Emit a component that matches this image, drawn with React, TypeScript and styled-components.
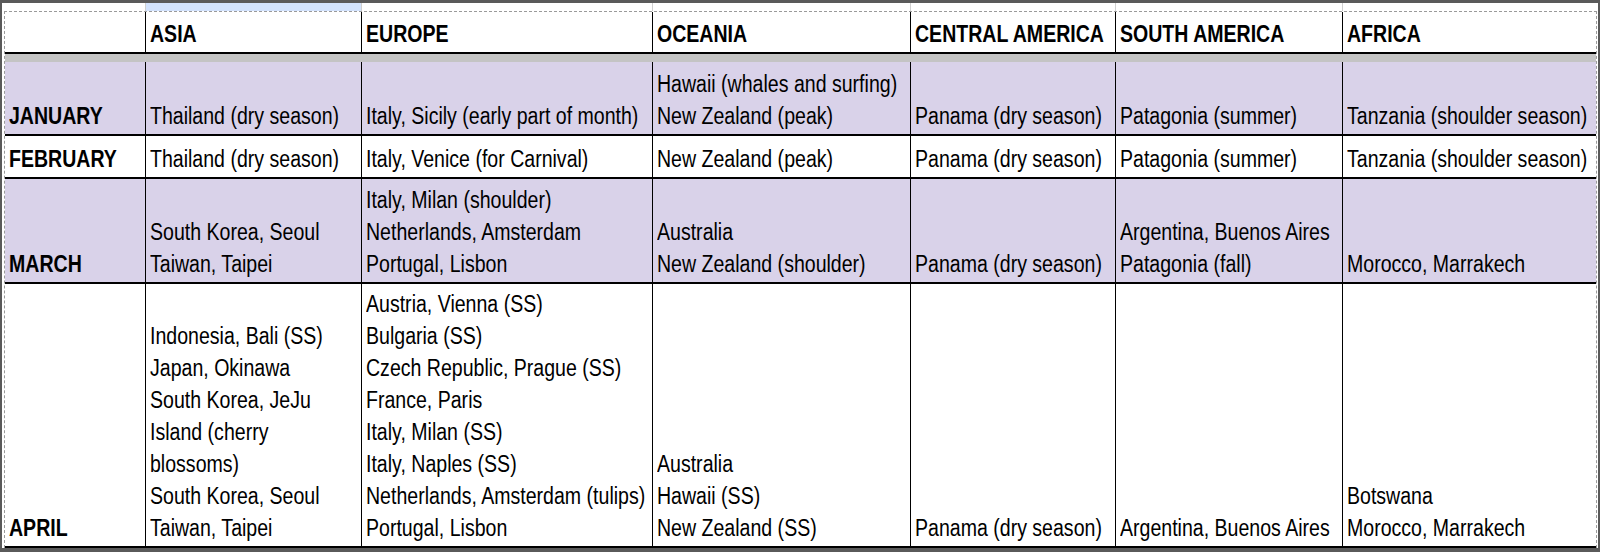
import styled, { createGlobalStyle } from "styled-components";

const GlobalStyle = createGlobalStyle`
  * { box-sizing: border-box; }
  body {
    margin: 0;
    background: #ffffff;
    font-family: "Liberation Sans Narrow", "Arial Narrow", "Liberation Sans", Arial, sans-serif;
    color: #000000;
  }
`;

// no narrow face installed, so the sheet's condensed type is squeezed by hand
const NARROW = 0.85;

const COLUMNS = "141px 216px 291px 258px 205px 227px 253px";

const REGIONS = ["ASIA", "EUROPE", "OCEANIA", "CENTRAL AMERICA", "SOUTH AMERICA", "AFRICA"];

type MonthRow = {
  month: string;
  tinted: boolean;
  height: number;
  cells: string[][];
};

const MONTHS: MonthRow[] = [
  {
    month: "JANUARY",
    tinted: true,
    height: 72,
    cells: [
      ["Thailand (dry season)"],
      ["Italy, Sicily (early part of month)"],
      ["Hawaii (whales and surfing)", "New Zealand (peak)"],
      ["Panama (dry season)"],
      ["Patagonia (summer)"],
      ["Tanzania (shoulder season)"],
    ],
  },
  {
    month: "FEBRUARY",
    tinted: false,
    height: 41,
    cells: [
      ["Thailand (dry season)"],
      ["Italy, Venice (for Carnival)"],
      ["New Zealand (peak)"],
      ["Panama (dry season)"],
      ["Patagonia (summer)"],
      ["Tanzania (shoulder season)"],
    ],
  },
  {
    month: "MARCH",
    tinted: true,
    height: 103,
    cells: [
      ["South Korea, Seoul", "Taiwan, Taipei"],
      ["Italy, Milan (shoulder)", "Netherlands, Amsterdam", "Portugal, Lisbon"],
      ["Australia", "New Zealand (shoulder)"],
      ["Panama (dry season)"],
      ["Argentina, Buenos Aires", "Patagonia (fall)"],
      ["Morocco, Marrakech"],
    ],
  },
  {
    month: "APRIL",
    tinted: false,
    height: 262,
    cells: [
      [
        "Indonesia, Bali (SS)",
        "Japan, Okinawa",
        "South Korea, JeJu",
        "Island (cherry",
        "blossoms)",
        "South Korea, Seoul",
        "Taiwan, Taipei",
      ],
      [
        "Austria, Vienna (SS)",
        "Bulgaria (SS)",
        "Czech Republic, Prague (SS)",
        "France, Paris",
        "Italy, Milan (SS)",
        "Italy, Naples (SS)",
        "Netherlands, Amsterdam (tulips)",
        "Portugal, Lisbon",
      ],
      ["Australia", "Hawaii (SS)", "New Zealand (SS)"],
      ["Panama (dry season)"],
      ["Argentina, Buenos Aires"],
      ["Botswana", "Morocco, Marrakech"],
    ],
  },
];

const App = () => {
  return (
    <>
      <GlobalStyle />
      <Frame>
        <ColumnStrip>
          {[-1, ...REGIONS.map((_, i) => i)].map((i) => (
            <StripCell key={i} $selected={i === 0} />
          ))}
        </ColumnStrip>
        <Sheet>
          <HeaderRow>
            <Cell />
            {REGIONS.map((r) => (
              <Cell key={r} $bold>
                <Line>{r}</Line>
              </Cell>
            ))}
          </HeaderRow>
          <FrozenBand />
          {MONTHS.map((row) => (
            <Row key={row.month} $tinted={row.tinted} $height={row.height}>
              <Cell $bold>
                <Line>{row.month}</Line>
              </Cell>
              {row.cells.map((lines, i) => (
                <Cell key={i}>
                  {lines.map((l) => (
                    <Line key={l}>{l}</Line>
                  ))}
                </Cell>
              ))}
            </Row>
          ))}
        </Sheet>
      </Frame>
    </>
  );
};

export default App;

const Frame = styled.div`
  width: 1600px;
  height: 552px;
  border-style: solid;
  border-color: #5a5a5a;
  border-width: 3px 2px 4px 2px;
  padding: 0 1px 0 2px;
  background: #ffffff;
  overflow: hidden;
`;

const ColumnStrip = styled.div`
  display: grid;
  grid-template-columns: ${COLUMNS};
  height: 8px;
  padding-left: 1px;
`;

const StripCell = styled.div<{ $selected?: boolean }>`
  background: ${({ $selected }) => ($selected ? "#d3e3fd" : "#ffffff")};
  border-right: 1px solid #cfcfcf;

  &:last-child {
    border-right: none;
  }
`;

const Sheet = styled.div`
  border-top: 1px dashed #9a9a9a;
  border-left: 1px dashed #9a9a9a;
  border-right: 1px dashed #9a9a9a;
`;

const HeaderRow = styled.div`
  display: grid;
  grid-template-columns: ${COLUMNS};
  height: 42px;
  border-bottom: 2px solid #000000;
  background: #ffffff;
`;

const FrozenBand = styled.div`
  height: 8px;
  background: #c4c4c4;
`;

const Row = styled.div<{ $tinted: boolean; $height: number }>`
  display: grid;
  grid-template-columns: ${COLUMNS};
  height: ${({ $height }) => $height + 2}px;
  border-bottom: 2px solid #000000;
  background: ${({ $tinted }) => ($tinted ? "#d9d2e9" : "#ffffff")};
`;

const Cell = styled.div<{ $bold?: boolean }>`
  display: flex;
  flex-direction: column;
  justify-content: flex-end;
  min-width: 0;
  padding: 0 3px 2px 4px;
  border-right: 1px solid #000000;
  font-size: 23px;
  line-height: 32px;
  font-weight: ${({ $bold }) => ($bold ? 700 : 400)};
  overflow: hidden;

  &:last-child {
    border-right: none;
  }
`;

const Line = styled.div`
  width: calc(100% / ${NARROW});
  white-space: nowrap;
  transform: scaleX(${NARROW});
  transform-origin: left center;
`;
